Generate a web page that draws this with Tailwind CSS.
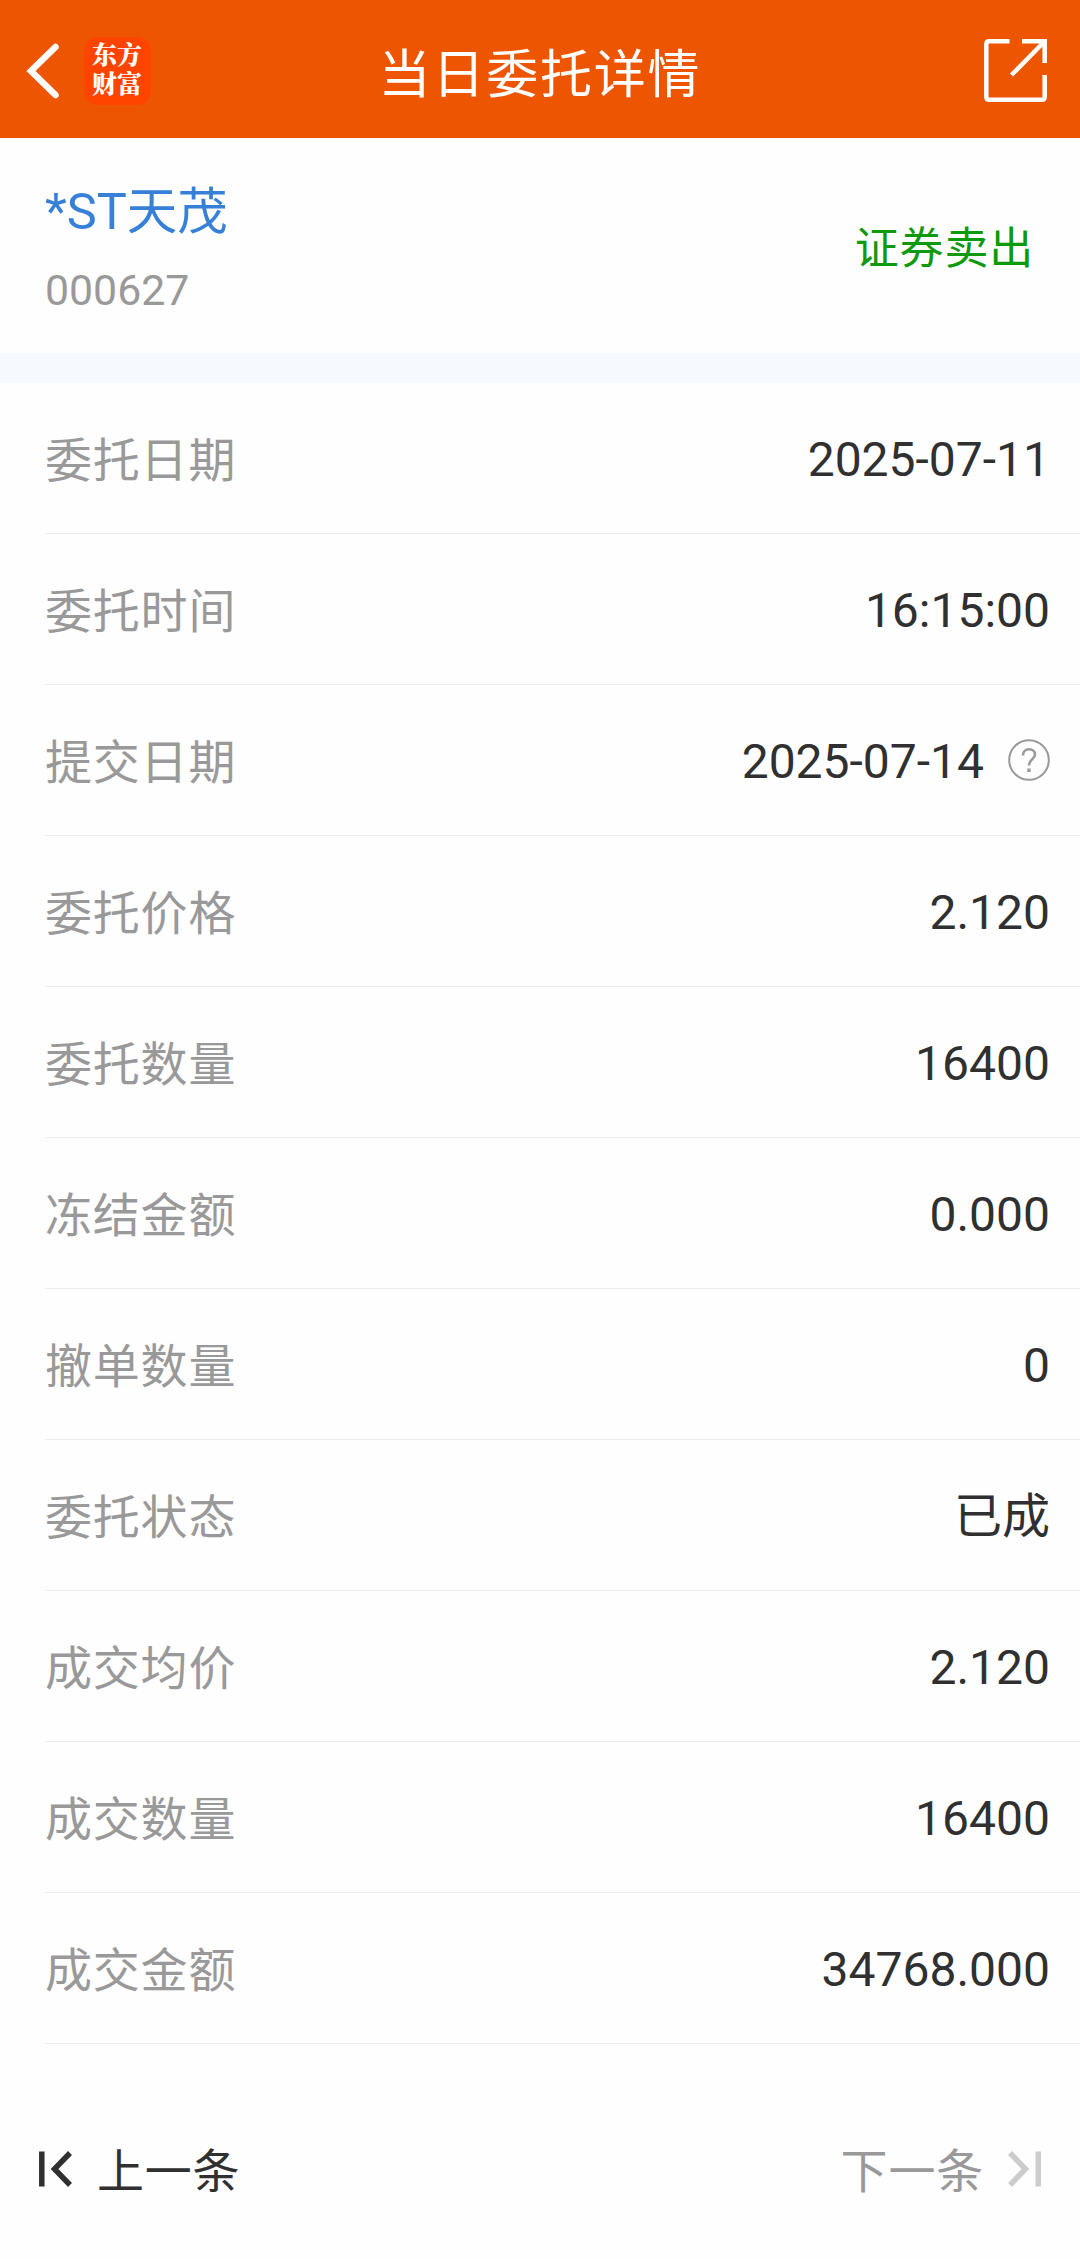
<!DOCTYPE html>
<html lang="zh-CN">
<head>
    <meta charset="UTF-8">
    <meta name="viewport" content="width=device-width, initial-scale=1.0">
    <title>当日委托详情</title>
    <script src="https://cdn.jsdelivr.net/npm/@tailwindcss/browser@4"></script>
</head>
<body class="bg-[#fefefe] font-[Roboto,'Noto_Sans_CJK_SC',sans-serif] text-[#303030]">
    <div class="flex flex-col w-[1080px] h-[2259px] overflow-hidden">
        <!-- Header -->
        <header class="grid grid-cols-[1fr_auto_1fr] items-center h-[138px] shrink-0 bg-[#ee5500] text-white">
            <div class="flex items-center pl-[26px] pt-[3px] gap-[24px]">
                <button aria-label="返回">
                    <svg class="block w-[34px] h-[56px]" viewBox="0 0 34 56" fill="none" stroke="currentColor" stroke-width="6.500">
                        <path stroke-linecap="round" stroke-linejoin="miter" d="M29.500 4L5 28L29.500 52"></path>
                    </svg>
                </button>
                <div class="flex flex-col items-center justify-center w-[67px] h-[68px] rounded-[14px] bg-[#ff4400] pr-px pb-[5px] font-['Noto_Serif_CJK_SC','Noto_Sans_CJK_SC',sans-serif] font-black text-[25px] leading-[29px]">
                    <span>东方</span>
                    <span>财富</span>
                </div>
            </div>
            <h1 class="text-[52px] tracking-[1.8px] leading-none pt-[14px]">当日委托详情</h1>
            <button class="justify-self-end mr-[33px]" aria-label="分享">
                <svg class="block w-[63px] h-[63px] mt-[3px]" viewBox="0 0 63 63" fill="none" stroke="currentColor" stroke-width="4.500">
                    <path d="M25.500 2.300H5.300Q2.300 2.300 2.300 5.300V57.700Q2.300 60.700 5.300 60.700H57.700Q60.700 60.700 60.700 57.700V36"></path>
                    <path d="M38 2.300H60.700V24M60 3L27.500 36"></path>
                </svg>
            </button>
        </header>

        <!-- Stock -->
        <section class="flex items-center justify-between h-[215px] shrink-0 pt-[6px] pl-[45px] pr-[46px]">
            <div class="flex flex-col">
                <span class="text-[50.500px] leading-[60px] text-[#3680d8]">*ST天茂</span>
                <span class="text-[42.800px] leading-[50px] mt-[23px] text-[#999999]">000627</span>
            </div>
            <span class="text-[44px] tracking-[0.800px] leading-none text-[#0e990e]">证券卖出</span>
        </section>
        <div class="h-[30px] shrink-0 bg-[#f6faff]"></div>

        <!-- Order details -->
        <dl id="details" class="shrink-0 pl-[45px] text-[48px] leading-[56px]"></dl>

        <!-- Previous / next -->
        <footer class="flex items-center justify-between grow pl-[39px] pr-[39px] pt-[35px] text-[47px] tracking-[0.800px] leading-[56px]">
            <button class="flex items-center gap-[25px]">
                <svg class="block w-[33px] h-[36px]" viewBox="0 0 33 36" fill="none" stroke="currentColor" stroke-width="5.500">
                    <path d="M2.800 0.500V35.500M31 2L15.500 18L31 34"></path>
                </svg>
                <span class="pt-[5px]">上一条</span>
            </button>
            <button class="flex items-center gap-[24px] text-[#999999]">
                <span class="pt-[5px]">下一条</span>
                <svg class="block w-[33px] h-[36px] text-[#cccccc]" viewBox="0 0 33 36" fill="none" stroke="currentColor" stroke-width="5.500">
                    <path d="M30.200 0.500V35.500M2 2L17.500 18L2 34"></path>
                </svg>
            </button>
        </footer>
    </div>

    <script>
        const rows = [
            { label: '委托日期', value: '2025-07-11' },
            { label: '委托时间', value: '16:15:00' },
            { label: '提交日期', value: '2025-07-14', help: true },
            { label: '委托价格', value: '2.120' },
            { label: '委托数量', value: '16400' },
            { label: '冻结金额', value: '0.000' },
            { label: '撤单数量', value: '0' },
            { label: '委托状态', value: '已成' },
            { label: '成交均价', value: '2.120' },
            { label: '成交数量', value: '16400' },
            { label: '成交金额', value: '34768.000' },
        ];

        const helpIcon = `
            <svg class="block w-[42px] h-[42px] text-[#999999]" viewBox="0 0 42 42" fill="none" stroke="currentColor">
                <circle cx="21" cy="21" r="19.800" stroke-width="2"></circle>
                <path stroke-width="2.600" d="M15 16.500C15 12.500 17.500 10.300 21 10.300C24.500 10.300 27 12.500 27 15.500C27 20 21 20.500 21 26.500"></path>
                <path stroke-width="3.400" d="M21 29.500V33"></path>
            </svg>
        `;

        document.getElementById('details').innerHTML = rows.map(row => `
            <div class="flex items-center justify-between h-[151px] pr-[30px] border-b border-[#eeeeee]">
                <dt class="pt-[5px] text-[47px] tracking-[0.800px] text-[#999999]">${row.label}</dt>
                <dd class="flex items-center gap-[24px]"><span class="pt-[4px]">${row.value}</span>${row.help ? helpIcon : ''}</dd>
            </div>
        `).join('');
    </script>
</body>
</html>
